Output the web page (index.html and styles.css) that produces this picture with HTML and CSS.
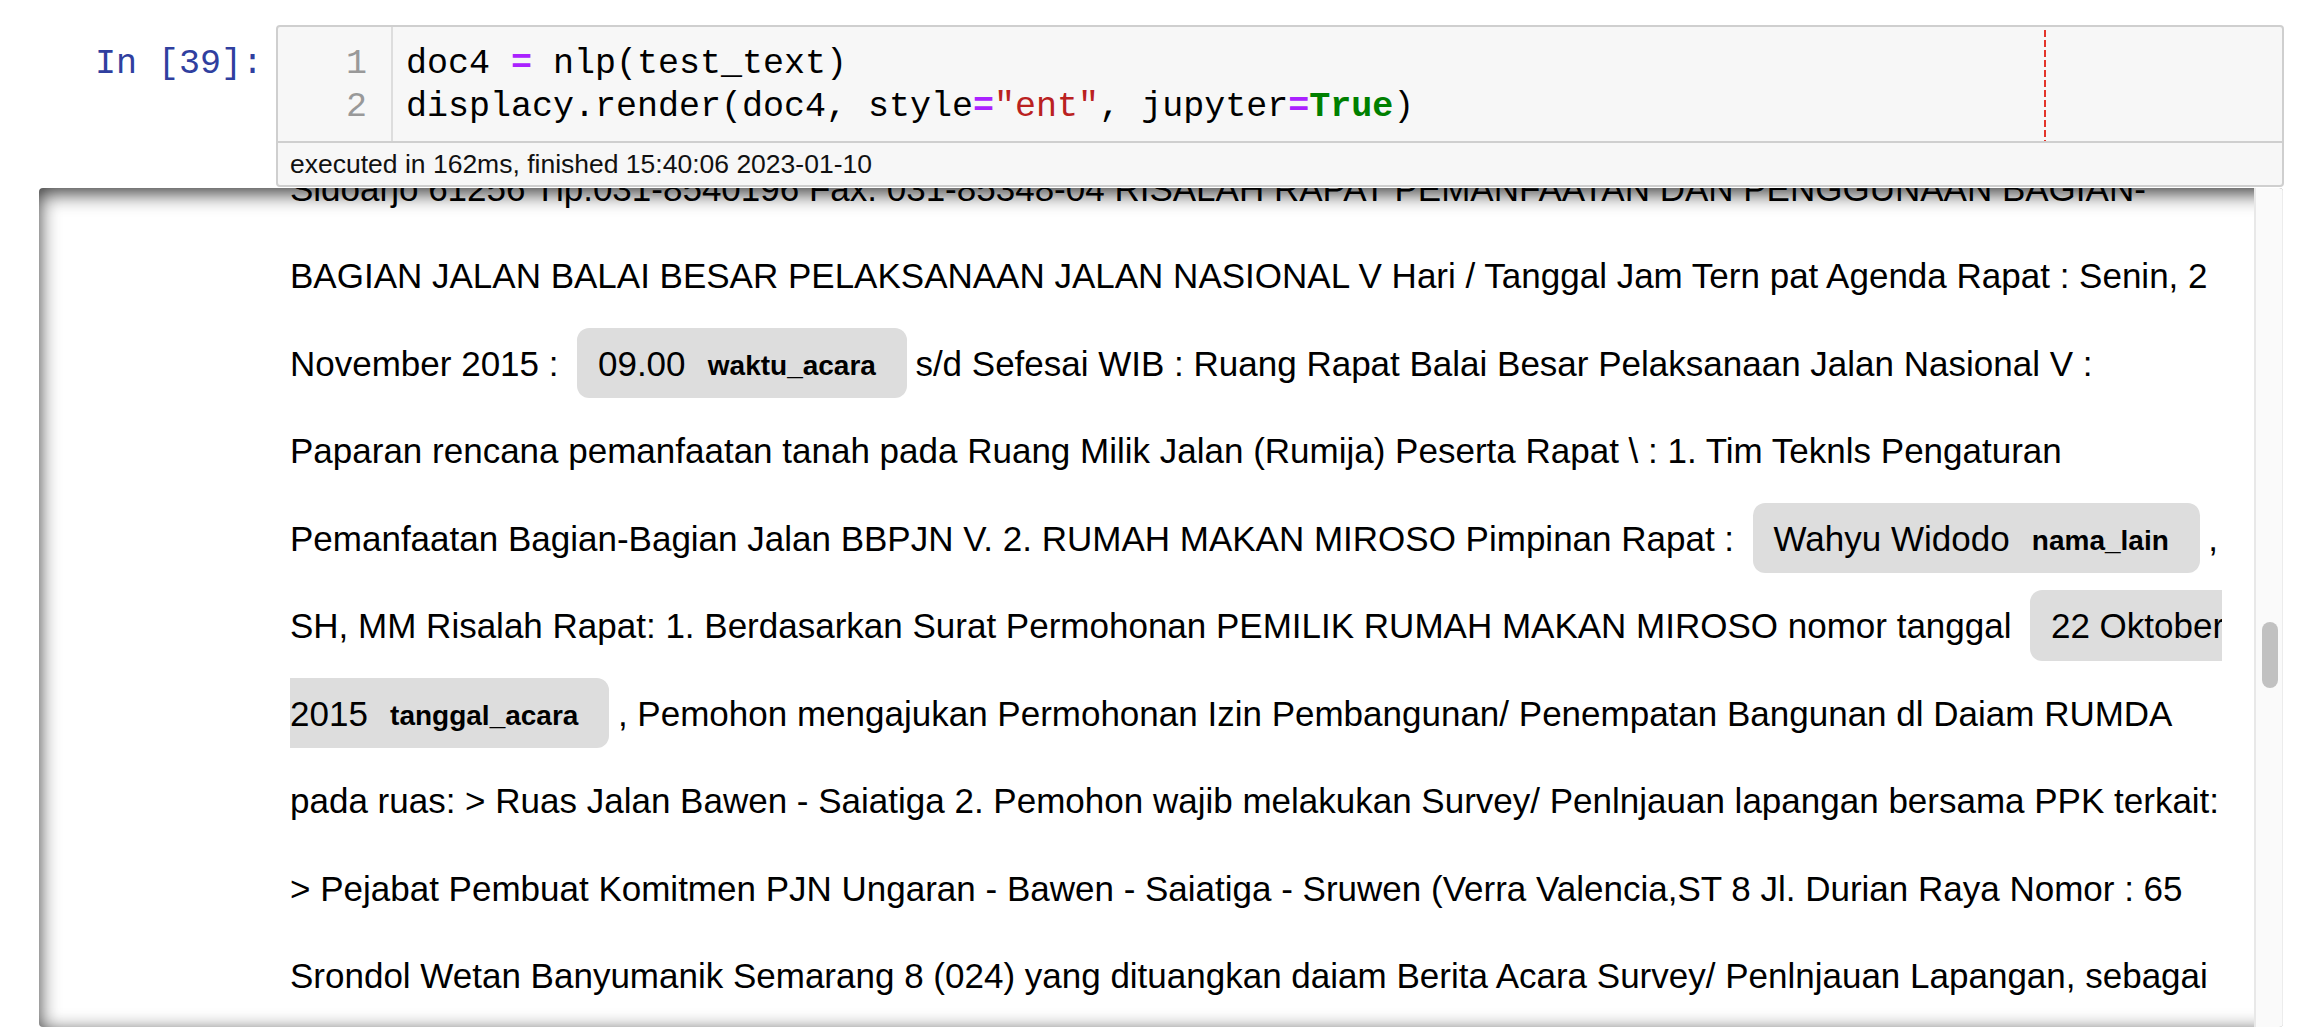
FILE: index.html
```html
<!DOCTYPE html>
<html>
<head>
<meta charset="utf-8">
<title>Notebook</title>
<link rel="stylesheet" href="styles.css">
</head>
<body>
<div class="cell">
  <div class="input">
    <div class="prompt">In&nbsp;[39]:</div>
    <div class="input-area">
      <div class="editor">
        <div class="gutter"><div>1</div><div>2</div></div>
        <div class="code">
          <div class="cm-line">doc4 <span class="op">=</span> nlp(test_text)</div>
          <div class="cm-line">displacy.render(doc4, style<span class="op">=</span><span class="str">"ent"</span>, jupyter<span class="op">=</span><span class="kw">True</span>)</div>
        </div>
        <div class="ruler"></div>
      </div>
      <div class="timing">executed in 162ms, finished 15:40:06 2023-01-10</div>
    </div>
  </div>
  <div class="output-scroll">
    <div class="output-view">
      <div class="entities">
        <div class="line">Sidoarjo 61256 Tlp.031-8540196 Fax. 031-85348-04 RISALAH RAPAT PEMANFAATAN DAN PENGGUNAAN BAGIAN-</div>
        <div class="line">BAGIAN JALAN BALAI BESAR PELAKSANAAN JALAN NASIONAL V Hari / Tanggal Jam Tern pat Agenda Rapat : Senin, 2</div>
        <div class="line">November 2015 : <mark class="ent">09.00 <span class="label">waktu_acara</span> </mark>s/d Sefesai WIB : Ruang Rapat Balai Besar Pelaksanaan Jalan Nasional V :</div>
        <div class="line">Paparan rencana pemanfaatan tanah pada Ruang Milik Jalan (Rumija) Peserta Rapat \ : 1. Tim Teknls Pengaturan</div>
        <div class="line">Pemanfaatan Bagian-Bagian Jalan BBPJN V. 2. RUMAH MAKAN MIROSO Pimpinan Rapat : <mark class="ent">Wahyu Widodo <span class="label">nama_lain</span> </mark>,</div>
        <div class="line">SH, MM Risalah Rapat: 1. Berdasarkan Surat Permohonan PEMILIK RUMAH MAKAN MIROSO nomor tanggal <mark class="ent ent-start">22 Oktober</mark></div>
        <div class="line"><mark class="ent ent-end">2015 <span class="label">tanggal_acara</span> </mark>, Pemohon mengajukan Permohonan Izin Pembangunan/ Penempatan Bangunan dl Daiam RUMDA</div>
        <div class="line">pada ruas: &gt; Ruas Jalan Bawen - Saiatiga 2. Pemohon wajib melakukan Survey/ Penlnjauan lapangan bersama PPK terkait:</div>
        <div class="line">&gt; Pejabat Pembuat Komitmen PJN Ungaran - Bawen - Saiatiga - Sruwen (Verra Valencia,ST 8 Jl. Durian Raya Nomor : 65</div>
        <div class="line">Srondol Wetan Banyumanik Semarang 8 (024) yang dituangkan daiam Berita Acara Survey/ Penlnjauan Lapangan, sebagai</div>
      </div>
    </div>
    <div class="scrollbar"><div class="thumb"></div></div>
  </div>
</div>
</body>
</html>
```

FILE: styles.css
```css
html, body {
  margin: 0;
  padding: 0;
  background: #fff;
}

body {
  width: 2324px;
  height: 1036px;
  overflow: hidden;
  font-family: "Liberation Sans", Arial, Helvetica, sans-serif;
  color: #000;
}

.cell {
  padding-top: 25px;
}

.input {
  display: flex;
  align-items: flex-start;
}

.prompt {
  flex: 0 0 224px;
  margin-left: 39px;
  padding-right: 13px;
  padding-top: 18px;
  text-align: right;
  font-family: "Liberation Mono", "DejaVu Sans Mono", monospace;
  font-size: 35px;
  line-height: 43px;
  color: #303F9F;
  white-space: nowrap;
}

.input-area {
  width: 2008px;
  box-sizing: border-box;
  border: 2px solid #cfcfcf;
  border-radius: 4px;
  background: #f7f7f7;
}

.editor {
  position: relative;
  display: flex;
  height: 114px;
  font-family: "Liberation Mono", "DejaVu Sans Mono", monospace;
  font-size: 35px;
  line-height: 43px;
}

.gutter {
  flex: 0 0 115px;
  box-sizing: border-box;
  border-right: 2px solid #dddddd;
  padding-top: 16px;
  padding-right: 24px;
  text-align: right;
  color: #999999;
}

.code {
  flex: 1;
  padding-top: 16px;
  padding-left: 13px;
  color: #000;
}

.cm-line {
  white-space: pre;
}

.op {
  color: #AA22FF;
  font-weight: bold;
}

.str {
  color: #BA2121;
}

.kw {
  color: #008000;
  font-weight: bold;
}

.ruler {
  position: absolute;
  left: 1766px;
  top: 3px;
  bottom: 0;
  width: 2px;
  background: repeating-linear-gradient(to bottom, #e3352b 0 7px, transparent 7px 10px);
}

.timing {
  border-top: 2px solid #cfcfcf;
  height: 42px;
  line-height: 42px;
  padding-left: 12px;
  font-size: 26.5px;
  color: #111;
  white-space: nowrap;
}

.output-scroll {
  display: flex;
  margin-left: 39px;
  margin-top: 1px;
  width: 2244px;
  height: 839px;
  border-radius: 4px;
  overflow: hidden;
  box-shadow: inset 0 5px 20px rgba(0, 0, 0, 0.8);
}

.output-view {
  flex: 1;
  min-width: 0;
  padding-left: 251px;
  padding-right: 32px;
  overflow: hidden;
}

.entities {
  margin-top: -43.5px;
  font-size: 35px;
  line-height: 87.5px;
  overflow: hidden;
}

.line {
  white-space: nowrap;
  height: 87.5px;
}

.ent {
  background: #dddddd;
  color: #000;
  padding: 0.45em 0.6em;
  margin: 0 0.25em;
  line-height: 1;
  border-radius: 0.35em;
}

.ent-start {
  margin-right: 0;
  padding-right: 0;
  border-radius: 0.35em 0 0 0.35em;
}

.ent-end {
  margin-left: 0;
  padding-left: 0;
  border-radius: 0 0.35em 0.35em 0;
}

.label {
  font-size: 0.8em;
  font-weight: bold;
  line-height: 1;
  vertical-align: middle;
  margin-left: 12.5px;
}

.scrollbar {
  flex: 0 0 29px;
  box-sizing: border-box;
  border-left: 2px solid #e8e8e8;
  border-right: 1px solid #ececec;
  background: #fafafa;
  padding-top: 434px;
}

.thumb {
  width: 16px;
  height: 66px;
  margin-left: 6px;
  border-radius: 8px;
  background: #c1c1c1;
}
```
